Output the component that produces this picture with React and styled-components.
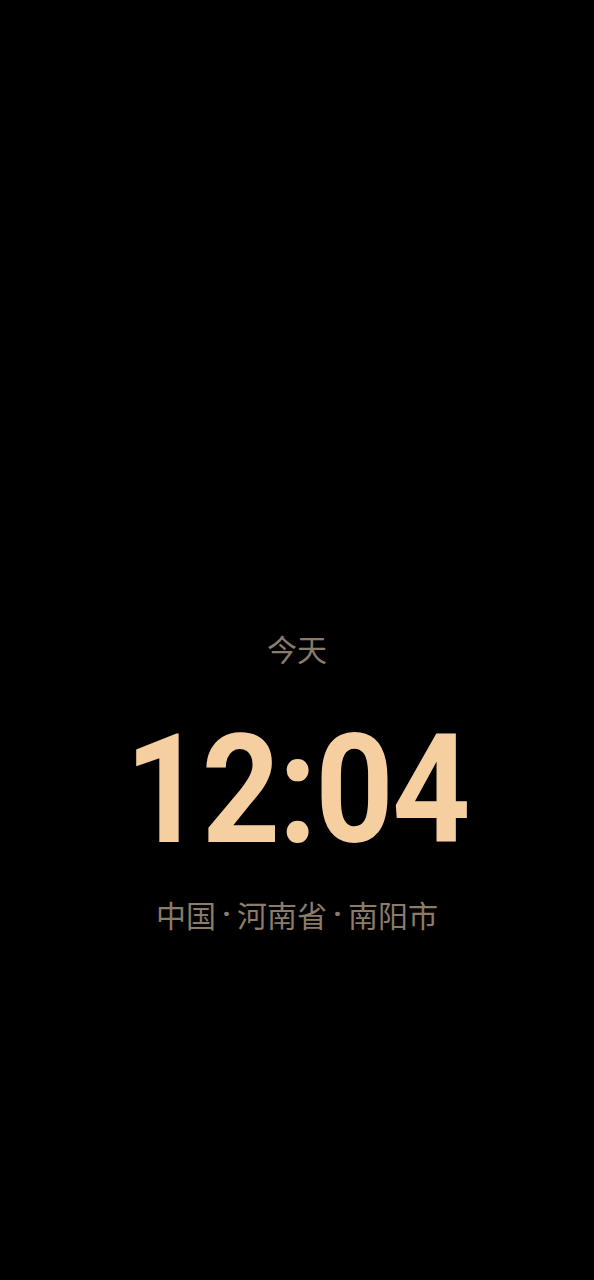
import React from "react";
import styled, { createGlobalStyle } from "styled-components";

const GlobalStyle = createGlobalStyle`
  html, body {
    margin: 0;
    padding: 0;
    background: #000;
  }
`;

const Screen = styled.div`
  width: 594px;
  height: 1280px;
  background: #000;
  display: flex;
  flex-direction: column;
  align-items: center;
  padding-top: 626px;
  box-sizing: border-box;
`;

const Caption = styled.div`
  font-family: "Noto Sans CJK SC", "Noto Sans", sans-serif;
  font-size: 30px;
  line-height: 44px;
  color: #8b7b69;
  white-space: nowrap;
`;

const Time = styled.div`
  margin-top: 40px;
  font-family: Roboto, "DejaVu Sans", sans-serif;
  font-weight: 700;
  font-size: 152px;
  line-height: 160px;
  color: #f6cfa1;
  letter-spacing: -2px;
  transform: scaleX(0.9);
  white-space: nowrap;
`;

const Place = styled(Caption)`
  margin-top: 22px;
  display: flex;
  align-items: center;
`;

const Dot = styled.span`
  font-family: Roboto, "Noto Sans", sans-serif;
  font-weight: 700;
  margin: 0 6px;
`;

export default function App() {
  return (
    <>
      <GlobalStyle />
      <Screen>
        <Caption>今天</Caption>
        <Time>12:04</Time>
        <Place>
          中国<Dot>·</Dot>河南省<Dot>·</Dot>南阳市
        </Place>
      </Screen>
    </>
  );
}
